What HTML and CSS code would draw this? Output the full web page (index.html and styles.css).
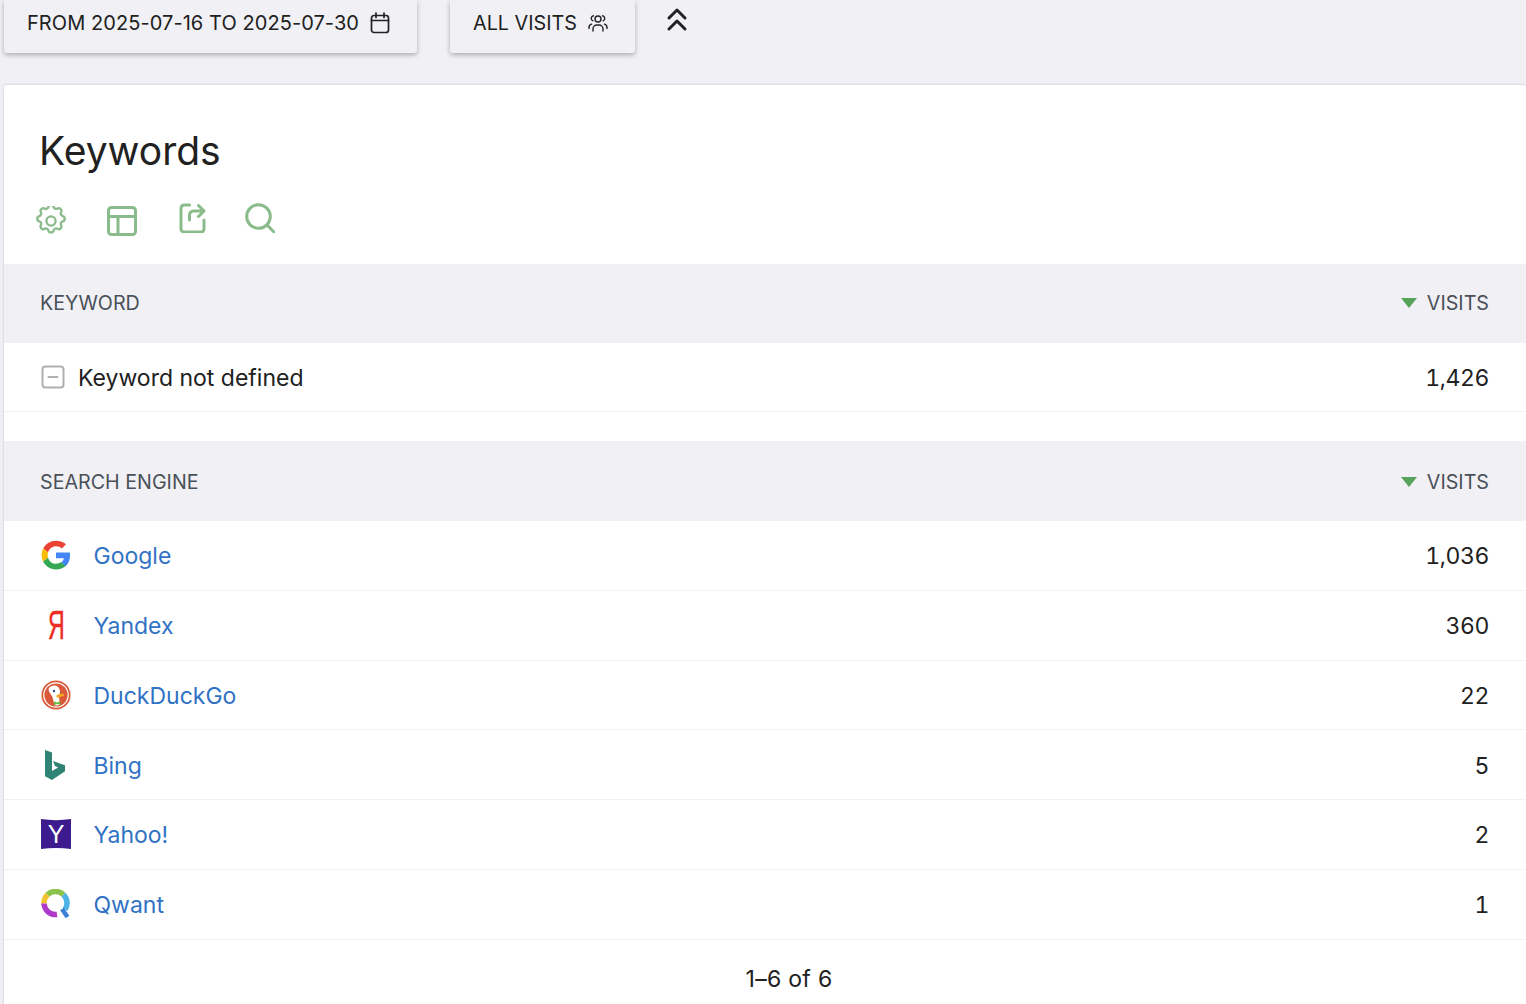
FILE: index.html
```html
<!DOCTYPE html>
<html lang="en">
<head>
    <meta charset="UTF-8">
    <meta name="viewport" content="width=device-width, initial-scale=1.0">
    <title>Keywords</title>
    <link rel="stylesheet" href="styles.css">
</head>
<body>
    <div class="toolbar">
        <button class="chip chip-date">
            FROM 2025-07-16 TO 2025-07-30
            <svg class="chip-icon" viewBox="0 0 20 22" fill="none" stroke="#222" stroke-width="1.7" stroke-linecap="round" stroke-linejoin="round">
                <rect x="1.5" y="3.500" width="17" height="17" rx="2.500"/>
                <path d="M1.500 8.500h17M6 1v4.500M14 1v4.500"/>
            </svg>
        </button>
        <button class="chip chip-visits">
            ALL VISITS
            <svg class="chip-icon chip-icon-users" viewBox="0 0 20 18" fill="none" stroke="#222" stroke-width="1.400" stroke-linecap="round" stroke-linejoin="round">
                <circle cx="10" cy="5" r="3"/>
                <path d="M5 17v-2a4 4 0 0 1 4-4h2a4 4 0 0 1 4 4v2"/>
                <path d="M5.500 1.800a2.600 2.600 0 0 0-.6 5M14.500 1.800a2.600 2.600 0 0 1 .6 5M1 14.500v-1a3.500 3.500 0 0 1 2.500-3.300M19 14.500v-1a3.500 3.500 0 0 0-2.500-3.300"/>
            </svg>
        </button>
        <svg class="collapse" viewBox="0 0 24 26" fill="none" stroke="#222" stroke-width="3" stroke-linecap="round" stroke-linejoin="round">
            <path d="M4 12l8-8 8 8M4 23l8-8 8 8"/>
        </svg>
    </div>

    <div class="card">
        <h1 class="title">Keywords</h1>
        <div class="actions">
            <svg class="action action-gear" viewBox="2.200 2.200 19.600 19.600" fill="none" stroke="#8abb8a" stroke-width="1.500" stroke-linecap="round" stroke-linejoin="round">
                <circle cx="12" cy="12" r="3"/>
                <path d="M10.300 2.800c.4-1.700 3-1.700 3.400 0 .3 1.100 1.500 1.600 2.500 1.100 1.500-.9 3.300.9 2.400 2.400-.6 1 0 2.200 1.100 2.500 1.700.4 1.700 3 0 3.400-1.100.3-1.600 1.500-1.100 2.500.9 1.500-.9 3.300-2.400 2.400-1-.6-2.200 0-2.500 1.100-.4 1.700-3 1.700-3.400 0-.3-1.100-1.500-1.600-2.500-1.100-1.500.9-3.300-.9-2.400-2.400.6-1 0-2.200-1.100-2.500-1.700-.4-1.700-3 0-3.400 1.100-.3 1.600-1.500 1.100-2.500-.9-1.500.9-3.300 2.400-2.400 1 .6 2.200 0 2.500-1.100z"/>
            </svg>
            <svg class="action action-table" viewBox="0 0 30 30" fill="none" stroke="#8abb8a" stroke-width="3" stroke-linecap="round" stroke-linejoin="round">
                <rect x="1.500" y="1.500" width="27" height="27" rx="3"/>
                <path d="M1.500 10.500h27M11 10.500v18"/>
            </svg>
            <svg class="action action-share" viewBox="0 0 27 30" fill="none" stroke="#8abb8a" stroke-width="3" stroke-linecap="round" stroke-linejoin="round">
                <path d="M10.500 2H5a3 3 0 0 0-3 3v21a3 3 0 0 0 3 3h17a3 3 0 0 0 3-3v-9"/>
                <path d="M10.500 17v-5a4 4 0 0 1 4-4H25M19.500 2.500L25 8l-5.500 5.500"/>
            </svg>
            <svg class="action action-search" viewBox="0 0 30 30" fill="none" stroke="#8abb8a" stroke-width="3" stroke-linecap="round" stroke-linejoin="round">
                <circle cx="13.500" cy="13.500" r="11.800"/>
                <path d="M22 22l7 7"/>
            </svg>
        </div>

        <div class="head-row head-row-first">
            <span>KEYWORD</span>
            <span class="head-sort"><i class="sort-arrow"></i>VISITS</span>
        </div>
        <div class="row row-first">
            <span class="row-label">
                <svg class="none-icon" viewBox="0 0 24 24" fill="none" stroke="#b0b0b0" stroke-width="2" stroke-linecap="round">
                    <rect x="1.500" y="1.500" width="21" height="21" rx="3"/>
                    <path d="M7.500 12h9"/>
                </svg>
                <span class="row-text">Keyword not defined</span>
            </span>
            <span class="row-count">1,426</span>
        </div>

        <div class="spacer"></div>

        <div class="head-row head-row-tall">
            <span>SEARCH ENGINE</span>
            <span class="head-sort"><i class="sort-arrow"></i>VISITS</span>
        </div>

        <div class="row">
            <span class="row-label">
                <svg class="logo" viewBox="0 0 48 48">
                    <path fill="#ea4335" d="M24 10c3.600 0 6.800 1.300 9.300 3.600l6.700-6.700C35.900 3.100 30.500 1 24 1 15 1 7.200 6.200 3.400 13.700l7.900 6.100C13.100 14.100 18.100 10 24 10z"/>
                    <path fill="#4285f4" d="M46.500 24.500c0-1.600-.1-3.100-.4-4.500H24v9h12.700c-.6 2.900-2.200 5.400-4.700 7l7.500 5.800c4.400-4 7-10 7-17.300z"/>
                    <path fill="#fbbc05" d="M11.300 28.200c-.5-1.300-.7-2.700-.7-4.200s.3-2.900.7-4.200l-7.900-6.100C1.800 16.800 1 20.300 1 24s.8 7.200 2.400 10.300l7.900-6.100z"/>
                    <path fill="#34a853" d="M24 47c6.200 0 11.500-2 15.500-5.500L32 35.700c-2.100 1.400-4.800 2.300-8 2.300-5.900 0-10.900-4-12.700-9.800l-7.900 6.100C7.200 41.800 15 47 24 47z"/>
                </svg>
                <a class="engine" href="#">Google</a>
            </span>
            <span class="row-count">1,036</span>
        </div>
        <div class="row">
            <span class="row-label">
                <span class="logo yandex-mark"><span class="yandex-glyph">Я</span></span>
                <a class="engine" href="#">Yandex</a>
            </span>
            <span class="row-count">360</span>
        </div>
        <div class="row">
            <span class="row-label">
                <svg class="logo" viewBox="0 0 30 30">
                    <circle cx="15" cy="15" r="14.500" fill="#d9593a"/>
                    <circle cx="15" cy="15" r="12.200" fill="none" stroke="#fff" stroke-width="1.200"/>
                    <path fill="#fff" d="M7.500 9c1.500-3.500 6.500-4.500 9-2.500 2 1.500 2.500 4 2.500 6l-1 5 1 7c-1.500 1-4 1.200-5.500.7L11.500 17C10 14 7.500 12 7.500 9z"/>
                    <circle cx="13" cy="11" r="1.200" fill="#2d4f8e"/>
                    <path fill="#f7a823" d="M15.500 15.500c1-1.500 5-2.200 7-1.700 1 .3.800 1.800-.2 2.200l-5.300 1.800c-1 .1-2-1.300-1.500-2.300z"/>
                    <path fill="#65bc46" d="M13 21.500l3.300 1 3-1.500.2 3.800-3-.8-3.300 1z"/>
                </svg>
                <a class="engine" href="#">DuckDuckGo</a>
            </span>
            <span class="row-count">22</span>
        </div>
        <div class="row">
            <span class="row-label">
                <svg class="logo" viewBox="0 0 30 30">
                    <path fill="#2f8374" d="M4 0l7 2.400v18.700l6.200-3.600-3.200-1.400-2-5 12 4.200v6L10.900 30 4 26.300z"/>
                </svg>
                <a class="engine" href="#">Bing</a>
            </span>
            <span class="row-count">5</span>
        </div>
        <div class="row">
            <span class="row-label">
                <svg class="logo" viewBox="0 0 30 30">
                    <path fill="#3d1a8e" d="M0 0c10 1.500 20 1.500 30 0v30c-10-1.500-20-1.500-30 0z"/>
                    <text class="yahoo-mark" x="15" y="24" text-anchor="middle">Y</text>
                </svg>
                <a class="engine" href="#">Yahoo!</a>
            </span>
            <span class="row-count">2</span>
        </div>
        <div class="row">
            <span class="row-label">
                <svg class="logo" viewBox="0 0 30 30" fill="none" stroke-width="5.500">
                    <path stroke="#8bc34a" d="M6.500 5.700a11.500 11.500 0 0 1 16 0"/>
                    <path stroke="#4fb3e8" d="M22.500 5.700a11.500 11.500 0 0 1 1.500 14.800"/>
                    <path stroke="#3a7fd5" stroke-width="4.500" d="M21 20l5.500 8"/>
                    <path stroke="#f1c232" d="M6.500 5.700A11.500 11.500 0 0 0 3 14.500"/>
                    <path stroke="#b03ac8" d="M3 14.500a11.500 11.500 0 0 0 13 10.900"/>
                </svg>
                <a class="engine" href="#">Qwant</a>
            </span>
            <span class="row-count">1</span>
        </div>

        <div class="pager">1–6 of 6</div>
    </div>
</body>
</html>
```

FILE: styles.css
```css
body {
    font-family: 'Inter', sans-serif;
    margin: 0;
    padding: 0;
    background-color: #f0f0f5;
    color: #212121;
    height: 1004px;
    overflow: hidden;
}

.toolbar {
    display: flex;
    align-items: flex-start;
    gap: 33px;
    height: 85px;
    padding-left: 4px;
    box-sizing: border-box;
}

.chip {
    display: flex;
    align-items: center;
    justify-content: center;
    gap: 11px;
    height: 53px;
    padding: 0 4px 7px 0;
    border: none;
    border-radius: 0 0 3px 3px;
    background: #f0f0f5;
    box-shadow: 0 2px 5px rgba(0, 0, 0, 0.28);
    font-family: inherit;
    font-size: 20px;
    color: #212121;
}

.chip-date {
    width: 413px;
    letter-spacing: 0.07px;
}

.chip-visits {
    width: 185px;
    font-size: 19.800px;
}

.chip-icon {
    width: 20px;
    height: 22px;
}

.chip-icon-users {
    height: 18px;
}

.collapse {
    width: 24px;
    height: 26px;
    margin: 6px 0 0 -3px;
}

.card {
    margin-left: 4px;
    height: 930px;
    background: #ffffff;
    border-radius: 3px 3px 0 0;
    box-shadow: 0 0 3px rgba(0, 0, 0, 0.18);
}

.title {
    margin: 0;
    padding: 42px 36px 0 35px;
    font-size: 39px;
    line-height: 48px;
    font-weight: 400;
    color: #212121;
}

.actions {
    display: flex;
    align-items: center;
    height: 44px;
    margin-top: 24px;
    margin-bottom: 21px;
    padding-left: 32px;
}

.action {
    flex: none;
}

.action-gear {
    width: 30px;
    height: 30px;
}

.action-table {
    width: 30px;
    height: 30px;
    margin-left: 41px;
}

.action-share {
    width: 27px;
    height: 30px;
    margin-left: 42px;
    margin-top: -6px;
}

.action-search {
    width: 30px;
    height: 30px;
    margin-left: 39px;
    margin-top: -6px;
}

.head-row {
    display: flex;
    justify-content: space-between;
    align-items: center;
    box-sizing: border-box;
    height: 79px;
    padding: 0 37px 0 36px;
    background: #f0f0f5;
    font-size: 19.700px;
    color: #4a5058;
}

.head-row-first {
    padding-bottom: 2px;
}

.head-row-tall {
    height: 80px;
    padding-top: 2px;
}

.head-sort {
    display: flex;
    align-items: center;
}

.sort-arrow {
    width: 0;
    height: 0;
    margin-right: 10px;
    border-left: 8px solid transparent;
    border-right: 8px solid transparent;
    border-top: 10px solid #57a35a;
}

.row {
    display: flex;
    justify-content: space-between;
    align-items: center;
    height: 68.750px;
    padding: 0 37px;
    border-bottom: 1px solid #f2f2f2;
    font-size: 23px;
    color: #212121;
}

.row-first {
    height: 68px;
}

.row-label {
    display: flex;
    align-items: center;
}

.row-text {
    padding-top: 2px;
}

.row-count {
    padding-top: 2px;
    font-variant-numeric: tabular-nums;
    letter-spacing: -0.4px;
}

.none-icon {
    width: 24px;
    height: 24px;
    margin-right: 13px;
}

.spacer {
    height: 29px;
}

.logo {
    flex: none;
    width: 30px;
    height: 30px;
    margin-right: 22.500px;
}

.yandex-mark {
    display: flex;
    justify-content: center;
    font-family: 'Liberation Sans', sans-serif;
    font-size: 40px;
    line-height: 30px;
    color: #ec2d24;
}

.yandex-glyph {
    transform: scaleX(0.58);
    -webkit-text-stroke: 0.5px #ec2d24;
}

.yahoo-mark {
    font-family: 'Liberation Sans', sans-serif;
    font-size: 25px;
    fill: #ffffff;
}

.engine {
    padding-top: 2px;
    color: #3072c4;
    text-decoration: none;
}

.pager {
    padding-top: 25px;
    padding-left: 48px;
    text-align: center;
    font-size: 23px;
    line-height: 29px;
    letter-spacing: 0.3px;
    color: #212121;
}
```
